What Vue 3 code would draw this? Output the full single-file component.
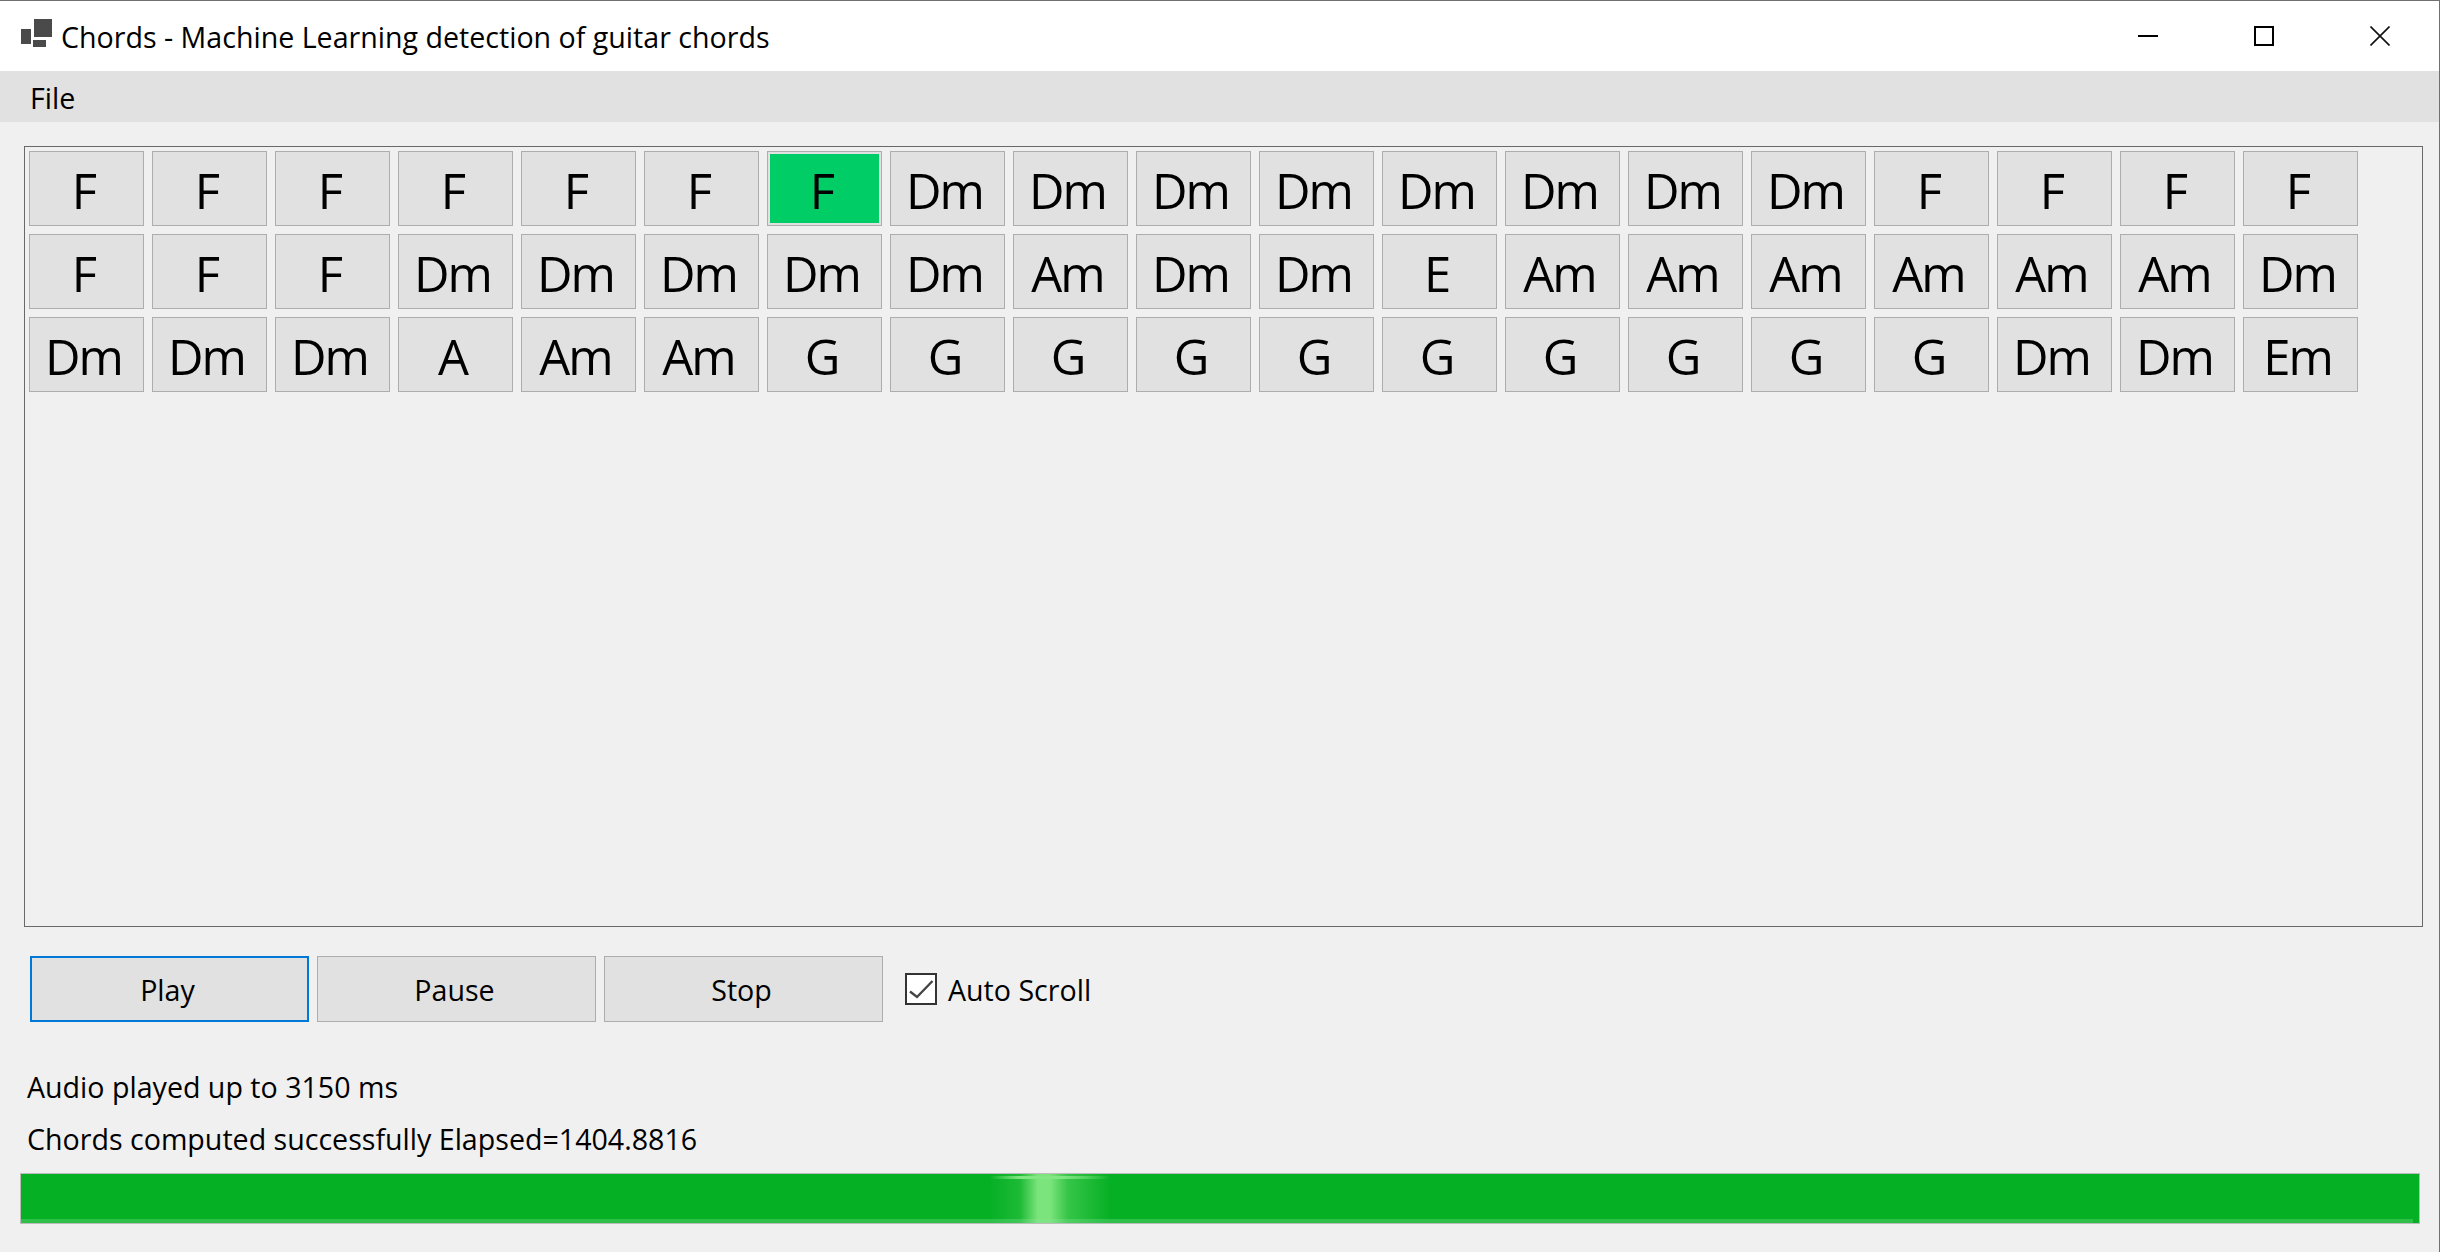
<template>
  <div class="window">
    <div class="titlebar">
      <svg class="app-icon" width="33" height="30" viewBox="0 0 33 30">
        <rect x="1" y="10" width="10" height="15" fill="#4a4a4a" />
        <rect x="14" y="0" width="18" height="18" fill="#4a4a4a" />
        <rect x="13" y="21" width="13" height="7" fill="#4a4a4a" />
      </svg>
      <div class="title">Chords - Machine Learning detection of guitar chords</div>
      <div class="controls">
        <svg width="20" height="20" viewBox="0 0 20 20"><rect x="0" y="9" width="20" height="2" fill="#000" /></svg>
        <svg width="20" height="20" viewBox="0 0 20 20"><rect x="1" y="1" width="18" height="18" fill="none" stroke="#000" stroke-width="2" /></svg>
        <svg width="20" height="20" viewBox="0 0 20 20"><path d="M0.5 0.5L19.5 19.5M19.5 0.5L0.5 19.5" stroke="#111" stroke-width="1.6" fill="none" /></svg>
      </div>
    </div>
    <div class="menubar"><span class="menu-item">File</span></div>

    <div class="chord-panel">
      <div class="chord-grid">
        <button
          v-for="(chord, i) in chords"
          :key="i"
          class="chord"
          :class="{ active: i === activeIndex }"
        >{{ chord }}</button>
      </div>
    </div>

    <div class="toolbar">
      <button class="action focused">Play</button>
      <button class="action">Pause</button>
      <button class="action">Stop</button>
      <label class="auto-scroll">
        <span class="checkbox">
          <svg width="28" height="28" viewBox="0 0 28 28"><path d="M3 16.5L10 22L25.5 6" fill="none" stroke="#444" stroke-width="2.4" /></svg>
        </span>
        Auto Scroll
      </label>
    </div>

    <div class="status first">Audio played up to 3150 ms</div>
    <div class="status">Chords computed successfully Elapsed=1404.8816</div>

    <div class="progress">
      <div class="glow"></div>
      <div class="glow-top"></div>
      <div class="shine-bottom"></div>
    </div>
  </div>
</template>

<script setup>
const row1 = ['F', 'F', 'F', 'F', 'F', 'F', 'F', 'Dm', 'Dm', 'Dm', 'Dm', 'Dm', 'Dm', 'Dm', 'Dm', 'F', 'F', 'F', 'F']
const row2 = ['F', 'F', 'F', 'Dm', 'Dm', 'Dm', 'Dm', 'Dm', 'Am', 'Dm', 'Dm', 'E', 'Am', 'Am', 'Am', 'Am', 'Am', 'Am', 'Dm']
const row3 = ['Dm', 'Dm', 'Dm', 'A', 'Am', 'Am', 'G', 'G', 'G', 'G', 'G', 'G', 'G', 'G', 'G', 'G', 'Dm', 'Dm', 'Em']
const chords = [...row1, ...row2, ...row3]
const activeIndex = 6
</script>

<style>
html, body {
  margin: 0;
  background: #f0f0f0;
}
</style>

<style scoped>
.window {
  width: 2440px;
  height: 1252px;
  box-sizing: border-box;
  background: #f0f0f0;
  border-top: 1px solid #707070;
  border-right: 1px solid #707070;
  font-family: "Open Sans", "Noto Sans", sans-serif;
  color: #000;
  overflow: hidden;
}
.titlebar {
  height: 70px;
  background: #fff;
  display: flex;
  align-items: center;
  padding-left: 20px;
}
.app-icon {
  align-self: flex-start;
  margin: 18px 8px 0 0;
}
.title {
  font-size: 28.6px;
  white-space: nowrap;
}
.controls {
  margin-left: auto;
  display: flex;
  gap: 96px;
  padding-right: 49px;
  margin-top: -1px;
}
.controls svg {
  display: block;
}
.menubar {
  height: 51px;
  background: #e1e1e1;
  display: flex;
  align-items: center;
  padding: 2px 0 0 30px;
  box-sizing: border-box;
}
.menu-item {
  font-size: 28.6px;
}
.chord-panel {
  margin: 24px 16px 0 24px;
  height: 781px;
  box-sizing: border-box;
  border: 1px solid #696969;
  padding: 4px;
}
.chord-grid {
  display: grid;
  grid-template-columns: repeat(19, 115px);
  grid-auto-rows: 75px;
  gap: 8px;
}
.chord {
  box-sizing: border-box;
  padding: 3px 6px 0 0;
  background: #e1e1e1;
  border: 1px solid #adadad;
  font-family: inherit;
  font-size: 49px;
  letter-spacing: -2px;
  color: #000;
  line-height: 1;
}
.chord.active {
  background: #00cd66;
  box-shadow: inset 0 0 0 2px #e1e1e1;
}
.toolbar {
  display: flex;
  align-items: center;
  gap: 8px;
  margin: 29px 0 0 30px;
  height: 66px;
}
.action {
  width: 279px;
  height: 66px;
  box-sizing: border-box;
  padding: 0 4px 0 0;
  background: #e1e1e1;
  border: 1px solid #adadad;
  font-family: inherit;
  font-size: 28.6px;
  color: #000;
}
.action.focused {
  border: 2px solid #0078d7;
}
.auto-scroll {
  display: flex;
  align-items: center;
  gap: 11px;
  margin-left: 14px;
  font-size: 28.6px;
}
.checkbox {
  width: 32px;
  height: 32px;
  box-sizing: border-box;
  border: 2px solid #333;
  background: #fff;
  display: flex;
  align-items: center;
  justify-content: center;
}
.status {
  font-size: 28.6px;
  line-height: 52px;
  margin-left: 27px;
  white-space: nowrap;
}
.status.first {
  margin-top: 39px;
}
.progress {
  position: relative;
  margin: 8px 19px 0 20px;
  height: 51px;
  box-sizing: border-box;
  border: 1px solid #bcbcbc;
  background: #06b025;
  overflow: hidden;
}
.glow {
  position: absolute;
  left: 969px;
  top: 0;
  bottom: 0;
  width: 120px;
  background: linear-gradient(90deg, rgba(124, 228, 124, 0) 0%, rgba(124, 228, 124, 0.2) 25%, #7ce47c 40%, #7ce47c 50%, rgba(124, 228, 124, 0.4) 65%, rgba(124, 228, 124, 0) 100%);
}
.glow-top {
  position: absolute;
  left: 969px;
  top: 2px;
  width: 120px;
  height: 3px;
  background: linear-gradient(90deg, rgba(130, 230, 130, 0), #82e682 25%, #82e682 60%, rgba(130, 230, 130, 0));
}
.shine-bottom {
  position: absolute;
  left: 0;
  right: 6px;
  bottom: 0;
  height: 4px;
  background: rgba(140, 230, 160, 0.3);
}
</style>
